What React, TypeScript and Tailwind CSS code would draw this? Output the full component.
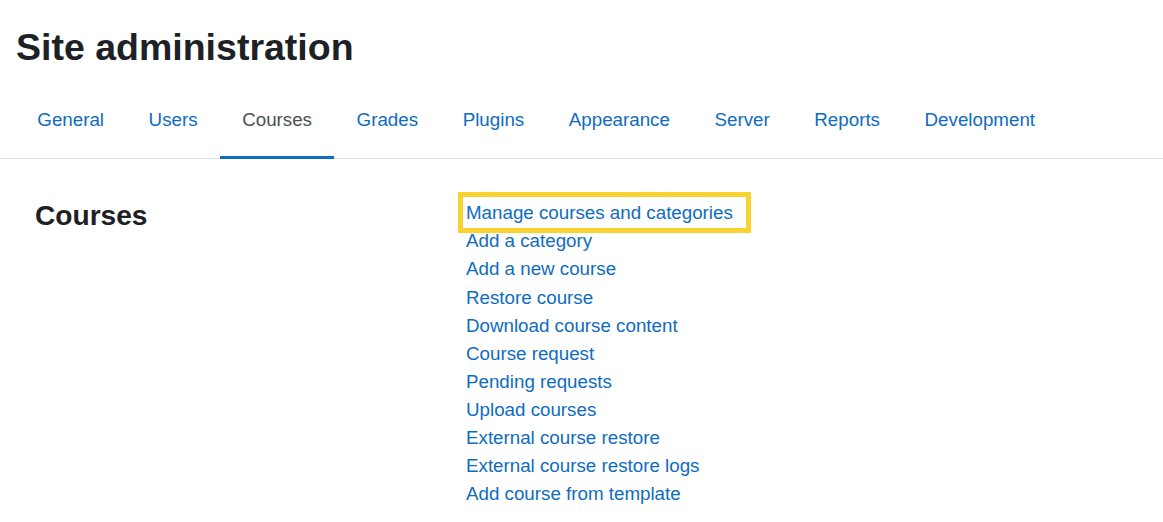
const tabs = [
  "General",
  "Users",
  "Courses",
  "Grades",
  "Plugins",
  "Appearance",
  "Server",
  "Reports",
  "Development",
];

const links = [
  "Manage courses and categories",
  "Add a category",
  "Add a new course",
  "Restore course",
  "Download course content",
  "Course request",
  "Pending requests",
  "Upload courses",
  "External course restore",
  "External course restore logs",
  "Add course from template",
];

export default function App() {
  return (
    <div className="min-h-[522px] bg-white text-[#1d2125] font-['Liberation_Sans',Arial,sans-serif]">
      <h1 className="px-4 pt-[24.5px] text-[37.5px] leading-[45px] font-bold">Site administration</h1>

      {/* secondary navigation */}
      <nav className="mt-[12px] border-b border-[#dee2e6]">
        <ul className="flex pl-[15px]">
          {tabs.map((t) => {
            const active = t === "Courses";
            return (
              <li key={t} className="-mb-px">
                <a
                  href="#"
                  className={
                    active
                      ? "block px-[22.3px] pt-[24.5px] pb-[22px] text-[18.75px] leading-[28.125px] text-[#495057] border-b-[3px] border-[#0f6cbf]"
                      : "block px-[22.3px] pt-[24.5px] pb-[22px] text-[18.75px] leading-[28.125px] text-[#0f6cbf] border-b-[3px] border-transparent"
                  }
                >
                  {t}
                </a>
              </li>
            );
          })}
        </ul>
      </nav>

      <div className="grid grid-cols-[431px_1fr] px-[35px] pt-[40px]">
        <h3 className="text-[28.125px] leading-[33.75px] font-bold">Courses</h3>
        <ul className="text-[18.75px] leading-[28.125px]">
          {links.map((l, i) => (
            <li key={l}>
              <a href="#" className="relative inline-block text-[#0f6cbf]">
                {l}
                {i === 0 && (
                  <span className="absolute -left-[8.5px] -top-[7px] w-[293px] h-[40.5px] border-[5px] border-[#f8d330] pointer-events-none" />
                )}
              </a>
            </li>
          ))}
        </ul>
      </div>
    </div>
  );
}
